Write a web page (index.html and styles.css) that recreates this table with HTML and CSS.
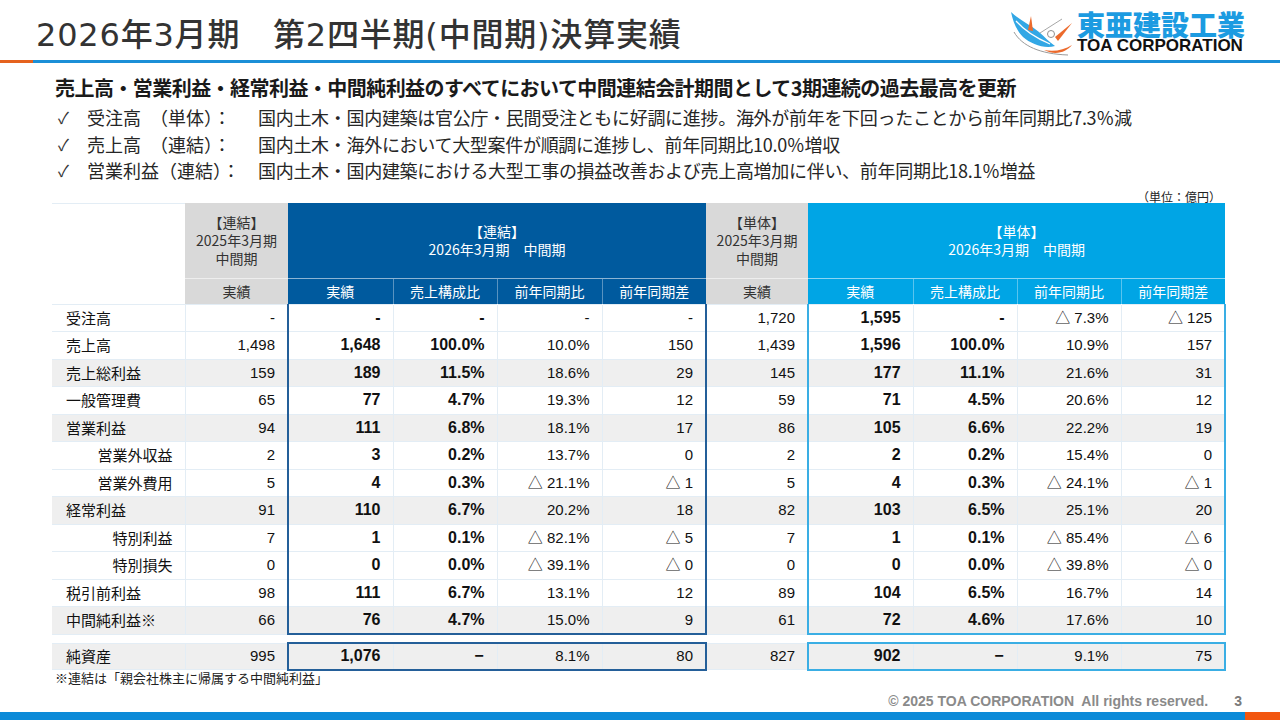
FILE: index.html
```html
<!DOCTYPE html>
<html lang="ja">
<head>
<meta charset="utf-8">
<title>2026年3月期 第2四半期(中間期)決算実績</title>
<link rel="stylesheet" href="styles.css">
</head>
<body>
<div class="slide">
  <header class="top">
    <h1 class="title">2026年3月期　第2四半期(中間期)決算実績</h1>
    <div class="logo">
      <svg class="logo-mark" viewBox="0 0 66 46" aria-hidden="true">
        <path d="M4 22 C12 36 30 44 58 45" fill="none" stroke="#9a9a9a" stroke-width="1"/>
        <path d="M1 2 C9 10 19 14 29 22 C35 27 39 32 45 36 C34 39 21 34 13 27 C7 21 3 12 1 2 Z" fill="#32a7e5"/>
        <path d="M6 11 C14 20 26 28 40 34" fill="none" stroke="#fff" stroke-width="1.2"/>
        <path d="M18 20 L21 6 L23 21 Z" fill="#ec6a2c"/>
        <path d="M45 27 L62 13 L48 31 Z" fill="#ec6a2c"/>
        <path d="M34 40 C44 42 54 40 62 35 C56 42 46 46 34 40 Z" fill="#ec6a2c"/>
        <circle cx="41" cy="24" r="3.5" fill="none" stroke="#8f8f8f" stroke-width="1"/>
        <path d="M30 23 L52 9" stroke="#8f8f8f" stroke-width="0.8"/>
      </svg>
      <div class="logo-text">
        <span class="logo-ja">東亜建設工業</span>
        <span class="logo-en">TOA CORPORATION</span>
      </div>
    </div>
  </header>
  <div class="rule"><span class="rule-accent"></span><span class="rule-main"></span></div>

  <main class="content">
    <p class="lead">売上高・営業利益・経常利益・中間純利益のすべてにおいて中間連結会計期間として3期連続の過去最高を更新</p>
    <ul class="points">
      <li><span class="check">✓</span><span class="point-label">受注高　（単体）：</span><span class="point-text">国内土木・国内建築は官公庁・民間受注ともに好調に進捗。海外が前年を下回ったことから前年同期比7.3％減</span></li>
      <li><span class="check">✓</span><span class="point-label">売上高　（連結）：</span><span class="point-text">国内土木・海外において大型案件が順調に進捗し、前年同期比10.0％増収</span></li>
      <li><span class="check">✓</span><span class="point-label">営業利益（連結）：</span><span class="point-text">国内土木・国内建築における大型工事の損益改善および売上高増加に伴い、前年同期比18.1％増益</span></li>
    </ul>
    <div class="unit">（単位：億円）</div>

    <table class="fin">
      <colgroup>
        <col class="col-item"><col class="col-prev"><col class="col-a"><col class="col-b"><col class="col-a"><col class="col-b">
        <col class="col-sprev"><col class="col-a"><col class="col-b"><col class="col-b"><col class="col-b">
      </colgroup>
      <thead>
        <tr class="h1">
          <th class="blank" rowspan="2"></th>
          <th class="gray">【連結】<br>2025年3月期<br>中間期</th>
          <th class="dark" colspan="4">【連結】<br>2026年3月期　中間期</th>
          <th class="gray">【単体】<br>2025年3月期<br>中間期</th>
          <th class="light" colspan="4">【単体】<br>2026年3月期　中間期</th>
        </tr>
        <tr class="h2">
          <th class="gray">実績</th>
          <th class="dark">実績</th><th class="dark sep">売上構成比</th><th class="dark sep">前年同期比</th><th class="dark sep">前年同期差</th>
          <th class="gray">実績</th>
          <th class="light">実績</th><th class="light sep">売上構成比</th><th class="light sep">前年同期比</th><th class="light sep">前年同期差</th>
        </tr>
      </thead>
      <tbody>
        <tr><td class="item">受注高</td><td>-</td><td>-</td><td>-</td><td>-</td><td>-</td><td>1,720</td><td>1,595</td><td>-</td><td>△ 7.3%</td><td>△ 125</td></tr>
        <tr><td class="item">売上高</td><td>1,498</td><td>1,648</td><td>100.0%</td><td>10.0%</td><td>150</td><td>1,439</td><td>1,596</td><td>100.0%</td><td>10.9%</td><td>157</td></tr>
        <tr class="shade"><td class="item">売上総利益</td><td>159</td><td>189</td><td>11.5%</td><td>18.6%</td><td>29</td><td>145</td><td>177</td><td>11.1%</td><td>21.6%</td><td>31</td></tr>
        <tr><td class="item">一般管理費</td><td>65</td><td>77</td><td>4.7%</td><td>19.3%</td><td>12</td><td>59</td><td>71</td><td>4.5%</td><td>20.6%</td><td>12</td></tr>
        <tr class="shade"><td class="item">営業利益</td><td>94</td><td>111</td><td>6.8%</td><td>18.1%</td><td>17</td><td>86</td><td>105</td><td>6.6%</td><td>22.2%</td><td>19</td></tr>
        <tr><td class="item sub">営業外収益</td><td>2</td><td>3</td><td>0.2%</td><td>13.7%</td><td>0</td><td>2</td><td>2</td><td>0.2%</td><td>15.4%</td><td>0</td></tr>
        <tr><td class="item sub">営業外費用</td><td>5</td><td>4</td><td>0.3%</td><td>△ 21.1%</td><td>△ 1</td><td>5</td><td>4</td><td>0.3%</td><td>△ 24.1%</td><td>△ 1</td></tr>
        <tr class="shade"><td class="item">経常利益</td><td>91</td><td>110</td><td>6.7%</td><td>20.2%</td><td>18</td><td>82</td><td>103</td><td>6.5%</td><td>25.1%</td><td>20</td></tr>
        <tr><td class="item sub">特別利益</td><td>7</td><td>1</td><td>0.1%</td><td>△ 82.1%</td><td>△ 5</td><td>7</td><td>1</td><td>0.1%</td><td>△ 85.4%</td><td>△ 6</td></tr>
        <tr><td class="item sub">特別損失</td><td>0</td><td>0</td><td>0.0%</td><td>△ 39.1%</td><td>△ 0</td><td>0</td><td>0</td><td>0.0%</td><td>△ 39.8%</td><td>△ 0</td></tr>
        <tr><td class="item">税引前利益</td><td>98</td><td>111</td><td>6.7%</td><td>13.1%</td><td>12</td><td>89</td><td>104</td><td>6.5%</td><td>16.7%</td><td>14</td></tr>
        <tr class="shade"><td class="item">中間純利益※</td><td>66</td><td>76</td><td>4.7%</td><td>15.0%</td><td>9</td><td>61</td><td>72</td><td>4.6%</td><td>17.6%</td><td>10</td></tr>
      </tbody>
    </table>

    <table class="fin net">
      <colgroup>
        <col class="col-item"><col class="col-prev"><col class="col-a"><col class="col-b"><col class="col-a"><col class="col-b">
        <col class="col-sprev"><col class="col-a"><col class="col-b"><col class="col-b"><col class="col-b">
      </colgroup>
      <tbody>
        <tr class="shade"><td class="item">純資産</td><td>995</td><td>1,076</td><td class="dash">−</td><td>8.1%</td><td>80</td><td>827</td><td>902</td><td class="dash">−</td><td>9.1%</td><td>75</td></tr>
      </tbody>
    </table>

    <p class="note">※連結は「親会社株主に帰属する中間純利益」</p>
  </main>

  <footer class="foot">
    <span class="copy">© 2025 TOA CORPORATION&nbsp; All rights reserved.</span>
    <span class="page">3</span>
  </footer>
  <div class="bottom-bar"><span class="bar-main"></span><span class="bar-accent"></span></div>
</div>
</body>
</html>
```

FILE: styles.css
```css
* { box-sizing: border-box; }
html, body { margin: 0; padding: 0; }
body {
  width: 1280px;
  height: 720px;
  overflow: hidden;
  background: #fff;
  font-family: "Noto Sans CJK JP", "Noto Sans", sans-serif;
  color: #222;
}
.slide {
  width: 1280px;
  height: 720px;
  display: flex;
  flex-direction: column;
}

/* header */
.top {
  height: 60px;
  display: flex;
  justify-content: space-between;
  align-items: flex-start;
  padding: 0 35px 0 36px;
}
.title {
  margin: 0;
  padding-top: 17px;
  font-family: "DejaVu Sans", "Noto Sans CJK JP", sans-serif;
  font-size: 32px;
  line-height: 36px;
  letter-spacing: 0.8px;
  font-weight: 500;
  color: #333;
  white-space: nowrap;
}
.logo {
  display: flex;
  align-items: flex-start;
  margin-top: 11px;
  gap: 1px;
}
.logo-mark { width: 66px; height: 46px; display: block; margin-top: -1px; }
.logo-text { display: flex; flex-direction: column; }
.logo-ja {
  font-size: 28px;
  line-height: 26px;
  margin-bottom: 1px;
  font-weight: 900;
  color: #1c9be1;
  white-space: nowrap;
}
.logo-en {
  font-family: "Liberation Sans", sans-serif;
  font-weight: 700;
  font-size: 17px;
  line-height: 15px;
  color: #111;
  white-space: nowrap;
}

.rule { display: flex; height: 3px; }
.rule-accent { width: 33px; background: #e5621e; }
.rule-main { flex: 1; background: #1b8fd7; }

/* content */
.content {
  flex: 1;
  padding: 12px 0 0 52px;
}
.lead {
  margin: 0;
  padding-left: 3px;
  font-size: 20px;
  line-height: 26px;
  font-weight: 700;
  letter-spacing: -0.55px;
  color: #1a1a1a;
  white-space: nowrap;
}
.points {
  list-style: none;
  margin: 3px 0 0;
  padding: 0 0 0 6px;
}
.points li {
  display: flex;
  height: 26.5px;
  line-height: 26.5px;
  font-size: 18px;
  color: #262626;
  white-space: nowrap;
}
.check { width: 29px; font-size: 16px; color: #333; }
.point-label { width: 171px; }
.point-text { letter-spacing: -0.3px; }

.unit {
  width: 1173px;
  text-align: right;
  font-size: 12px;
  line-height: 13px;
  margin-top: 6px;
  padding-right: 4px;
  color: #222;
}

/* table */
.fin {
  border-collapse: collapse;
  table-layout: fixed;
  width: 1173px;
  font-family: "Liberation Sans", "Noto Sans CJK JP", sans-serif;
  font-size: 15px;
  color: #111;
}
.col-item { width: 133px; }
.col-prev { width: 103px; }
.col-a { width: 105px; }
.col-b { width: 104px; }
.col-sprev { width: 102px; }

.fin th {
  font-family: "Noto Sans CJK JP", sans-serif;
  font-weight: 400;
  font-size: 14px;
  line-height: 18px;
  text-align: center;
  padding: 0;
  border: 0;
}
.fin .h1 { height: 75px; }
.fin .h2 { height: 26px; }
.fin .h2 th { border-top: 1px solid rgba(255, 255, 255, 0.55); }
.fin th.sep { border-left: 1px solid rgba(255, 255, 255, 0.35); }
.fin th.blank { background: #fff; border-top: 1px solid #e3edf5; }
.fin th.gray { background: #d9d9d9; color: #333; }
.fin th.dark { background: #005a9e; color: #fff; }
.fin th.light { background: #00a5e5; color: #fff; }

.fin tbody tr { height: 27.5px; }
.fin td {
  padding: 0 12px 0 0;
  border: 1px solid #e3edf5;
  text-align: right;
  line-height: 18px;
  white-space: nowrap;
}
.fin td:first-child { border-left: 0; }
.fin td.item {
  font-family: "Noto Sans CJK JP", sans-serif;
  text-align: left;
  padding: 0 0 0 14px;
}
.fin td.item.sub { text-align: right; padding: 0 12px 0 0; }
.fin td:nth-child(3),
.fin td:nth-child(4),
.fin td:nth-child(8),
.fin td:nth-child(9) { font-weight: 700; font-size: 16px; }
.fin td.dash { padding-right: 13px; }
.fin tr.shade td { background: #efefef; }

.fin td:nth-child(3) { border-left: 2px solid #245f99; }
.fin td:nth-child(6) { border-right: 2px solid #245f99; }
.fin td:nth-child(8) { border-left: 2px solid #3aaee4; }
.fin td:nth-child(11) { border-right: 2px solid #3aaee4; }
.fin tbody tr:last-child td:nth-child(n+3):nth-child(-n+6) { border-bottom: 2px solid #245f99; }
.fin tbody tr:last-child td:nth-child(n+8) { border-bottom: 2px solid #3aaee4; }
.net { margin-top: 7px; }
.net tbody tr { height: 26.5px; }
.net td:nth-child(n+3):nth-child(-n+6) { border-top: 2px solid #245f99; }
.net td:nth-child(n+8) { border-top: 2px solid #3aaee4; }

.note {
  margin: 0;
  padding-left: 3px;
  font-size: 13px;
  line-height: 14px;
  color: #222;
}

/* footer */
.foot {
  height: 22px;
  display: flex;
  justify-content: flex-end;
  align-items: center;
  gap: 26px;
  padding-right: 38px;
  font-family: "Liberation Sans", sans-serif;
  font-weight: 700;
  font-size: 14px;
  color: #8a8a8a;
}
.page { color: #7a7a7a; }
.bottom-bar { height: 8px; display: flex; }
.bar-main { flex: 1; background: #0b8ad8; }
.bar-accent { width: 35px; background: #f2560f; }
```
